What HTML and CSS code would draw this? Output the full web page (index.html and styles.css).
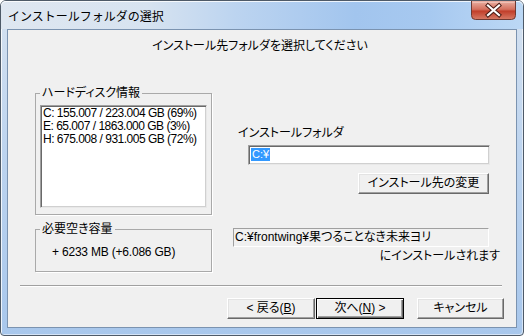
FILE: index.html
```html
<!DOCTYPE html>
<html lang="ja">
<head>
<meta charset="utf-8">
<title>インストールフォルダの選択</title>
<link rel="stylesheet" href="styles.css">
</head>
<body>
<div class="window">
  <div class="titlebar">
    <span class="title">インストールフォルダの選択</span>
    <div class="close">
      <svg width="45" height="19" viewBox="0 0 45 19">
        <defs>
          <linearGradient id="cg" x1="0" y1="0" x2="0" y2="1">
            <stop offset="0" stop-color="#e9b1a4"/>
            <stop offset="0.45" stop-color="#d4705e"/>
            <stop offset="0.55" stop-color="#c13f2b"/>
            <stop offset="1" stop-color="#d77b66"/>
          </linearGradient>
        </defs>
        <path d="M0.5 0 V14.5 Q0.5 18.5 4.5 18.5 H40.5 Q44.5 18.5 44.5 14.5 V0" fill="url(#cg)" stroke="#6e3a33"/>
        <path d="M1.5 1.5 H43.5" stroke="#f3c9bf" stroke-width="1" opacity="0.7"/>
        <path d="M17 4.5 L28 14 M28 4.5 L17 14" stroke="#4b1c15" stroke-width="4.2" stroke-linecap="square"/>
        <path d="M17 4.5 L28 14 M28 4.5 L17 14" stroke="#ffffff" stroke-width="2.2" stroke-linecap="square"/>
      </svg>
    </div>
  </div>
  <div class="client">
    <div class="heading">インストール先フォルダを選択してください</div>
    <div class="body">
      <div class="left">
        <fieldset class="group disk">
          <legend>ハードディスク情報</legend>
          <div class="listbox sunken">
            <div class="row">C: 155.007 / 223.004 GB (69%)</div>
            <div class="row">E: 65.007 / 1863.000 GB (3%)</div>
            <div class="row">H: 675.008 / 931.005 GB (72%)</div>
          </div>
        </fieldset>
        <fieldset class="group need">
          <legend>必要空き容量</legend>
          <div class="need-val">+ 6233 MB (+6.086 GB)</div>
        </fieldset>
      </div>
      <div class="right">
        <div class="label">インストールフォルダ</div>
        <div class="edit sunken"><span class="sel">C:¥</span></div>
        <div class="btn change">インストール先の変更</div>
        <div class="path">C:¥frontwing¥果つることなき未来ヨリ</div>
        <div class="suffix">にインストールされます</div>
      </div>
    </div>
    <div class="sep"></div>
    <div class="buttons">
      <div class="btn back">&lt; 戻る(<u>B</u>)</div>
      <div class="btn next default">次へ(<u>N</u>) &gt;</div>
      <div class="btn cancel">キャンセル</div>
    </div>
  </div>
</div>
</body>
</html>
```

FILE: styles.css
```css
* { box-sizing: border-box; }
html, body { margin: 0; padding: 0; }
body {
  width: 524px;
  height: 336px;
  overflow: hidden;
  background: #ffffff;
  font-family: "Liberation Sans", "Noto Sans CJK JP", sans-serif;
  font-size: 12px;
  color: #000;
  font-feature-settings: "palt";
}
.window {
  width: 524px;
  height: 336px;
  border: 1px solid #4e5a68;
  border-radius: 6px 6px 4px 4px;
  background: linear-gradient(to bottom, #d6e2f0 0%, #bdd4ef 45%, #a8c7ec 100%);
  box-shadow: inset 1px 1px 0 rgba(255,255,255,0.8), inset -1px -1px 0 rgba(255,255,255,0.5);
  display: flex;
  flex-direction: column;
  padding: 0 6px 7px 6px;
}
.titlebar {
  margin: 0 -6px;
  height: 28px;
  display: flex;
  align-items: flex-start;
  padding-left: 7px;
  padding-right: 7px;
  border-radius: 5px 5px 0 0;
  background: linear-gradient(to right, #dfe7f1 0%, #d7e3f0 28%, #bcd4f0 45%, #a2c5ee 68%, #a7c9f0 82%, #bcd8f5 100%);
  box-shadow: inset 0 1px 0 rgba(255,255,255,0.8);
}
.title {
  font-family: "Noto Sans CJK JP", sans-serif;
  font-feature-settings: normal;
  font-size: 12px;
  line-height: 14px;
  margin-top: 8px;
  color: #000;
}
.close {
  margin-left: auto;
  width: 45px;
  height: 19px;
}
.close svg { display: block; }
.client {
  flex: 1;
  background: #f0f0f0;
  border: 1px solid #7b93b0;
  display: flex;
  flex-direction: column;
}
.heading {
  margin-top: 9px;
  height: 14px;
  line-height: 14px;
  text-align: center;
  padding-right: 4px;
}
.body {
  display: flex;
  margin-top: 33px;
}
.left {
  margin-left: 27px;
  width: 177px;
  display: flex;
  flex-direction: column;
}
.group {
  margin: 0;
  border: 1px solid #a9a9a9;
  box-shadow: 1px 1px 0 #fff;
  min-inline-size: 0;
}
.group legend {
  padding: 0 2px;
  line-height: 14px;
  height: 14px;
}
.disk { padding: 5px 4px 6px 4px; }
.need { padding: 10px 4px 12px 4px; margin-top: 7px; }
.sunken {
  border: 1px solid;
  border-color: #a0a0a0 #e8e8e8 #e8e8e8 #a0a0a0;
  box-shadow: inset 1px 1px 0 #696969, inset -1px -1px 0 #d0d0d0;
}
.listbox {
  background: #fff;
  height: 103px;
  padding: 1px 1px 0 2px;
}
.row {
  font-size: 12px;
  letter-spacing: -0.5px;
  line-height: 13px;
  white-space: nowrap;
}
.need-val {
  font-size: 12px;
  letter-spacing: -0.2px;
  line-height: 13px;
  height: 13px;
  padding-left: 12px;
  white-space: nowrap;
}
.right {
  margin-left: 21px;
  width: 267px;
  display: flex;
  flex-direction: column;
  align-items: flex-start;
}
.label {
  margin-top: 40px;
  padding-left: 5px;
  line-height: 14px;
}
.edit {
  margin-top: 5px;
  margin-left: 15px;
  width: 242px;
  height: 20px;
  background: #fff;
  padding: 2px 0 0 2px;
}
.sel {
  display: block;
  width: 19px;
  height: 13px;
  line-height: 13px;
  font-size: 11px;
  background: #3399ff;
  color: #fff;
  padding-left: 1px;
}
.btn {
  background: #f0f0f0;
  border: 1px solid;
  border-color: #fff #696969 #696969 #fff;
  box-shadow: inset -1px -1px 0 #a0a0a0, inset 1px 1px 0 #e3e3e3;
  height: 21px;
  line-height: 18px;
  text-align: center;
  white-space: nowrap;
}
.btn.default {
  border: 1px solid #000;
  box-shadow: inset 1px 1px 0 #fff, inset -1px -1px 0 #696969, inset -2px -2px 0 #a0a0a0;
}
.change {
  margin-top: 8px;
  margin-left: 125px;
  width: 131px;
}
.path {
  margin-top: 34px;
  width: 256px;
  height: 19px;
  line-height: 17px;
  padding-left: 1px;
  border: 1px solid;
  border-color: #a0a0a0 #fff #fff #a0a0a0;
  white-space: nowrap;
}
.suffix {
  margin-top: 2px;
  width: 267px;
  text-align: right;
  line-height: 14px;
}
.sep {
  margin-top: 13px;
  margin-left: 12px;
  width: 482px;
  height: 2px;
  border-top: 1px solid #a0a0a0;
  border-bottom: 1px solid #fff;
}
.buttons {
  margin-top: 11px;
  display: flex;
  justify-content: flex-end;
  padding-right: 12px;
}
.back { width: 88px; margin-right: 1px; }
.next { width: 88px; margin-right: 13px; }
.cancel { width: 87px; }
```
